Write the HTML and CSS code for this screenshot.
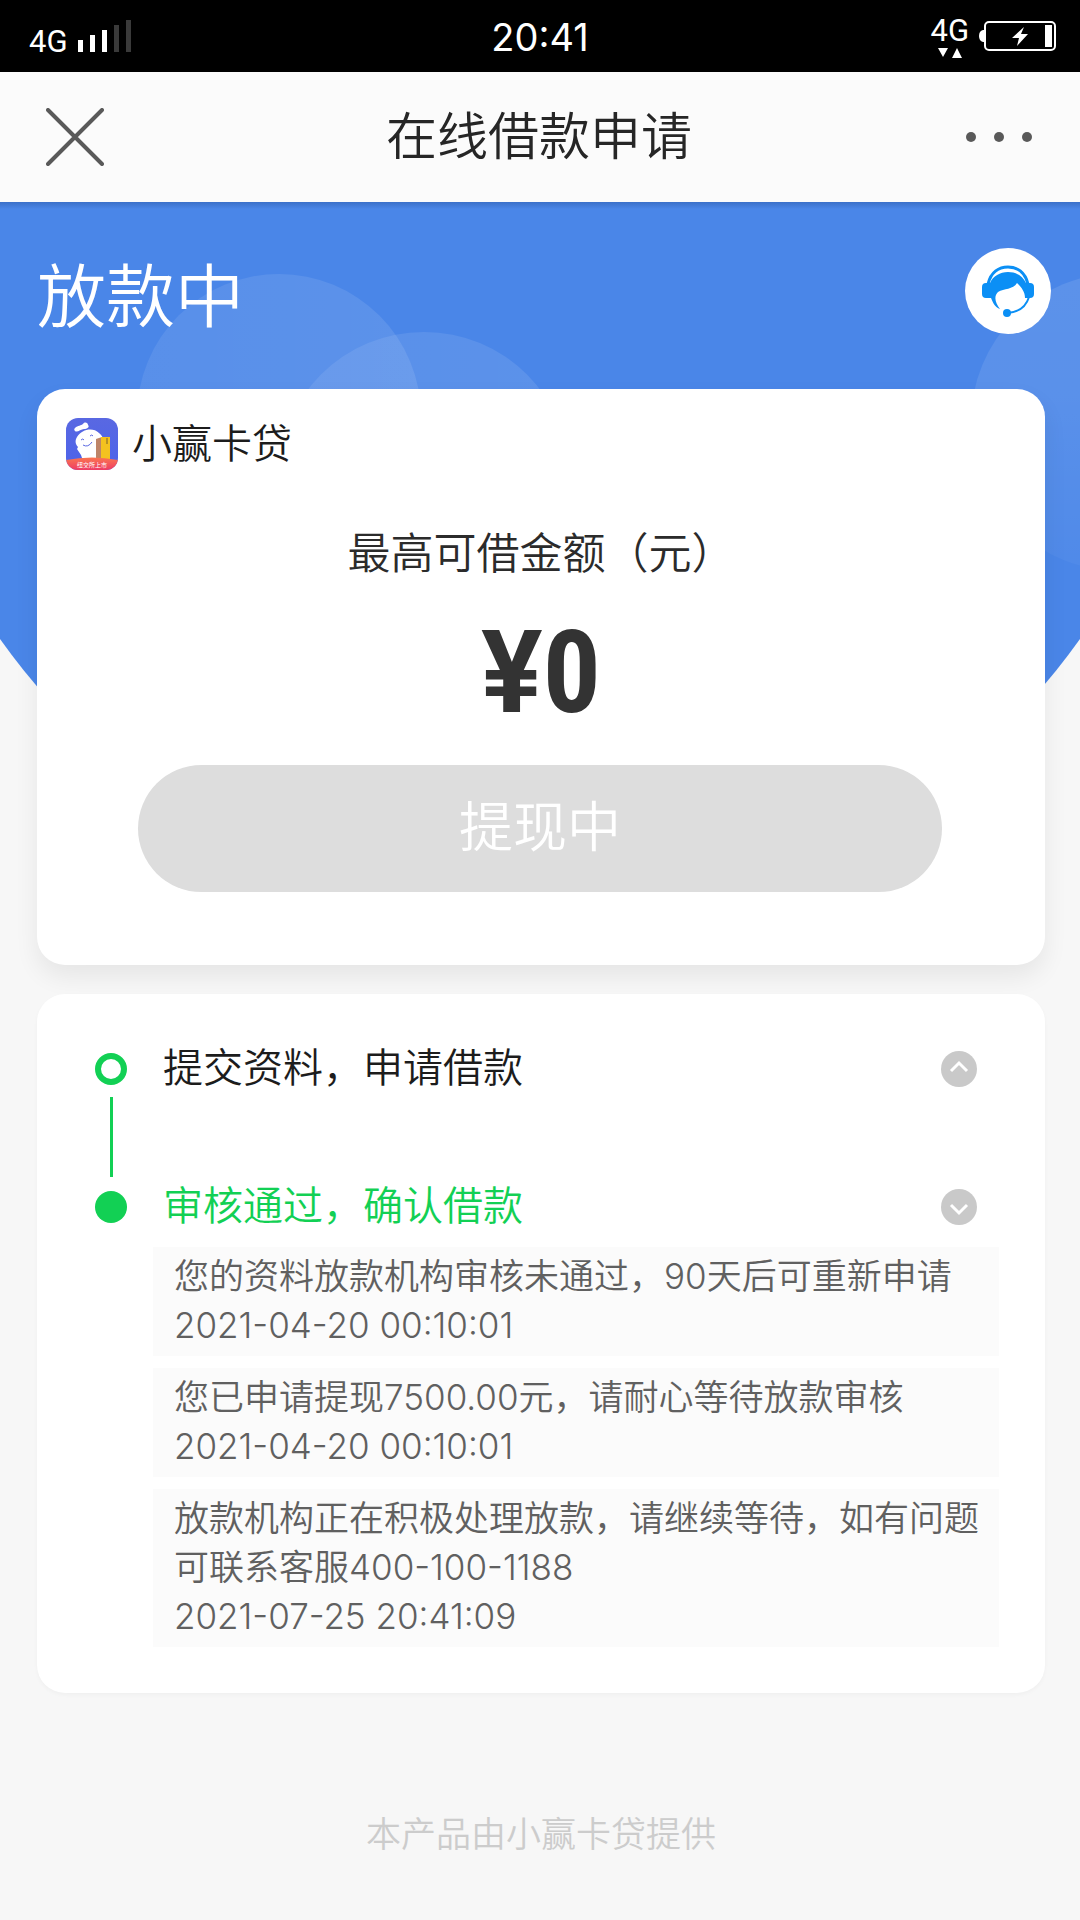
FILE: index.html
```html
<!DOCTYPE html>
<html lang="zh-CN">
<head>
<meta charset="utf-8">
<meta name="viewport" content="width=device-width, initial-scale=1">
<title>在线借款申请</title>
<link rel="stylesheet" href="styles.css">
</head>
<body>
<div class="status-bar">
  <div class="status-side status-left">
    <span class="network">4G</span>
    <svg class="signal" width="54" height="34" viewBox="0 0 54 34" aria-hidden="true">
      <path fill="#fff" d="M0 22h5v12H0zM12 17h5v17h-5zM24 12h5v22h-5z"/>
      <path fill="#3a3a3a" d="M36 7h5v27h-5zM48 2h5v32h-5z"/>
    </svg>
  </div>
  <time class="clock">20:41</time>
  <div class="status-side status-right">
    <div class="data">
      <span class="network">4G</span>
      <svg width="24" height="10" viewBox="0 0 24 10" aria-hidden="true"><path fill="#fff" d="M0 0h10L5 9zM14 10h10L19 0z"/></svg>
    </div>
    <svg width="78" height="30" viewBox="0 0 78 30" aria-hidden="true">
      <path fill="#fff" d="M5 9v12H4q-4-1-4-6t4-6z"/>
      <rect x="6" y="1" width="70" height="28" rx="4" fill="none" stroke="#fff" stroke-width="2"/>
      <path fill="#fff" d="M45 6 33 17h7l-2 8 11-12h-7zM66 4h7v22h-7z"/>
    </svg>
  </div>
</div>

<header class="nav">
  <button class="icon-button" aria-label="关闭">
    <svg width="58" height="58" viewBox="0 0 58 58"><path d="M2 2l54 54M56 2 2 56" fill="none" stroke="#595959" stroke-width="4" stroke-linecap="round"/></svg>
  </button>
  <h1 class="nav-title">在线借款申请</h1>
  <button class="icon-button" aria-label="更多">
    <svg width="66" height="10" viewBox="0 0 66 10" fill="#595959"><circle cx="5" cy="5" r="5"/><circle cx="33" cy="5" r="5"/><circle cx="61" cy="5" r="5"/></svg>
  </button>
</header>

<main class="page">
  <svg class="backdrop" viewBox="0 0 1080 713" aria-hidden="true">
    <defs>
      <clipPath id="dome"><path d="M0 0H1080V437A663 663 0 0 1 0 437Z"/></clipPath>
      <linearGradient id="sheen" x1="0" y1="0" x2="1" y2="0"><stop offset="0" stop-color="#fff" stop-opacity=".08"/><stop offset="1" stop-color="#fff" stop-opacity=".1"/></linearGradient>
      <linearGradient id="fade" x1="0" y1="0" x2="0" y2="1"><stop offset="0" stop-color="#fff" stop-opacity=".1"/><stop offset=".4" stop-color="#fff" stop-opacity=".09"/><stop offset="1" stop-color="#fff" stop-opacity=".03"/></linearGradient>
      <linearGradient id="edge" x1="0" y1="0" x2="0" y2="1"><stop offset="0" stop-color="#3b70c8"/><stop offset="1" stop-color="#4a86e8"/></linearGradient>
    </defs>
    <g clip-path="url(#dome)">
      <rect width="1080" height="713" fill="#4a86e8"/>
      <rect width="1080" height="7" fill="url(#edge)"/>
      <circle cx="279" cy="214" r="142" fill="url(#sheen)"/>
      <circle cx="424" cy="276" r="146" fill="url(#sheen)"/>
      <circle cx="1120" cy="220" r="149" fill="url(#fade)"/>
    </g>
  </svg>

  <div class="hero">
    <h2 class="hero-title">放款中</h2>
    <button class="support" aria-label="在线客服">
      <svg width="52" height="52" viewBox="0 0 52 52">
        <path d="M6 19C9 7 17 2 26 2s17 5 20 17" fill="none" stroke="#0b8ff5" stroke-width="3"/>
        <path fill="#0b8ff5" d="M0 22q0-4 4-4h4C11 11 18 7 26 7s15 4 18 11h4q4 0 4 4v7q0 4-4 4h-5c0-6-3-10-8-15-4 7-13 5-19 9-5 5-2 12 2 17-5-2-7-6-9-11H4q-4 0-4-4z"/>
        <path d="M47 32c-3 10-10 15-21 16" fill="none" stroke="#0b8ff5" stroke-width="2"/>
        <circle cx="25" cy="48" r="4" fill="#0b8ff5"/>
      </svg>
    </button>
  </div>

  <section class="card loan">
    <div class="brand">
      <svg width="52" height="52" viewBox="0 0 52 52" aria-hidden="true">
        <defs>
          <linearGradient id="tile" x1="0" y1="0" x2="0" y2="1"><stop offset="0" stop-color="#5968e2"/><stop offset="1" stop-color="#4c63ea"/></linearGradient>
          <linearGradient id="band" x1="0" y1="0" x2="0" y2="1"><stop offset="0" stop-color="#fa7550"/><stop offset="1" stop-color="#ee3c65"/></linearGradient>
          <clipPath id="tile-shape"><rect width="52" height="52" rx="12"/></clipPath>
        </defs>
        <g clip-path="url(#tile-shape)">
          <rect width="52" height="52" fill="url(#tile)"/>
          <path fill="#fff" d="M9 10c3-3 6-2 8-4 2-3 5-1 5 1 2 2-1 4-4 4-3 0-7 4-9 2-1-1-1-2 0-3zM11 19c5-8 16-10 22-4 3 2 4 5 4 7l-6 1v17H16l-1-3-4-6 1-2c-3-3-3-7-1-10z"/>
          <path d="M15 22q2-2 3 0M24 18q2-2 3 0M17 27q5 3 9-3" fill="none" stroke="#5968e2" stroke-width="1"/>
          <path fill="#bd8468" d="M30 21l6-2v22h-6z"/>
          <path fill="#f4c21f" d="M35 19h9v22h-9z"/>
          <path d="M41 20v6" stroke="#7b612b" stroke-width="1"/>
          <path fill="url(#band)" d="M0 42q26-5 52 0v10H0z"/>
          <text class="brand-band" x="26" y="49" text-anchor="middle">纽交所上市</text>
        </g>
      </svg>
      <span class="brand-name">小赢卡贷</span>
    </div>
    <p class="amount-label">最高可借金额（元）</p>
    <p class="amount"><span class="currency">¥</span>0</p>
    <button class="withdraw" disabled>提现中</button>
  </section>

  <section class="card progress">
    <ol class="steps">
      <li class="step">
        <span class="marker marker-open"></span>
        <h3 class="step-title">提交资料，申请借款</h3>
        <button class="toggle" aria-label="展开">
          <svg width="36" height="36" viewBox="0 0 36 36"><circle cx="18" cy="18" r="18" fill="#c9c9c9"/><path d="M10 20l8-8 8 8" fill="none" stroke="#fff" stroke-width="3"/></svg>
        </button>
        <span class="track"></span>
      </li>
      <li class="step step-current">
        <span class="marker"></span>
        <h3 class="step-title">审核通过，确认借款</h3>
        <button class="toggle" aria-label="收起">
          <svg width="36" height="36" viewBox="0 0 36 36"><circle cx="18" cy="18" r="18" fill="#c9c9c9"/><path d="M10 16l8 8 8-8" fill="none" stroke="#fff" stroke-width="3"/></svg>
        </button>
        <ul class="records">
          <li class="record">您的资料放款机构审核未通过，90天后可重新申请<time>2021-04-20 00:10:01</time></li>
          <li class="record">您已申请提现7500.00元，请耐心等待放款审核<time>2021-04-20 00:10:01</time></li>
          <li class="record">放款机构正在积极处理放款，请继续等待，如有问题可联系客服400-100-1188<time>2021-07-25 20:41:09</time></li>
        </ul>
      </li>
    </ol>
  </section>

  <footer class="footer">本产品由小赢卡贷提供</footer>
</main>
</body>
</html>
```
FILE: styles.css
```css
* {
  box-sizing: border-box;
}

body {
  margin: 0;
  min-height: 100vh;
  background: #f7f7f7;
  color: #1c1c1c;
  font-family: Inter, "Noto Sans CJK SC", sans-serif;
  font-weight: 350;
}

h1, h2, h3, p, ol, ul {
  margin: 0;
  padding: 0;
  font-weight: inherit;
}

ol, ul {
  list-style: none;
}

button {
  display: grid;
  place-items: center;
  padding: 0;
  border: 0;
  background: none;
  font: inherit;
}

svg {
  display: block;
}

.status-bar {
  display: grid;
  grid-template-columns: 1fr auto 1fr;
  align-items: center;
  height: 72px;
  padding: 0 23px;
  background: #000;
  color: #fff;
}

.status-side {
  display: flex;
  align-items: center;
  gap: 10px;
}

.status-left {
  padding-left: 6px;
}

.status-right {
  justify-content: flex-end;
}

.network {
  font-family: Roboto, sans-serif;
  font-size: 31px;
  font-weight: 400;
  line-height: 34px;
}

.signal {
  margin-bottom: 2px;
}

.status-side > .network {
  padding-top: 12px;
}

.data {
  display: grid;
  justify-items: center;
}

.clock {
  padding-top: 2px;
  font-size: 38px;
  font-weight: 400;
}

.nav {
  display: grid;
  grid-template-columns: 66px 1fr 66px;
  align-items: center;
  height: 130px;
  padding: 0 48px 0 46px;
  background: #fbfbfb;
}

.icon-button {
  justify-items: start;
}

.nav-title {
  color: #262626;
  font-size: 51px;
  line-height: 60px;
  text-align: center;
}

.page {
  position: relative;
  padding: 0 35px 0 37px;
}

.backdrop {
  position: absolute;
  top: 0;
  left: 0;
  z-index: -1;
  width: 100%;
}

.hero {
  display: flex;
  align-items: center;
  justify-content: space-between;
  height: 187px;
  margin-right: -6px;
}

.hero-title {
  padding-top: 2px;
  color: #fff;
  font-size: 69px;
  line-height: 80px;
}

.support {
  width: 86px;
  height: 86px;
  margin-bottom: 9px;
  border-radius: 50%;
  background: #fff;
}

.card {
  border-radius: 28px;
  background: #fff;
  box-shadow: 0 2px 4px rgba(0, 0, 0, 0.03);
}

.loan {
  display: flex;
  flex-direction: column;
  padding: 29px 29px 73px;
  box-shadow: 0 12px 24px rgba(0, 0, 0, 0.07);
}

.brand {
  display: flex;
  align-items: center;
  gap: 14px;
}

.brand-name {
  font-size: 40px;
  line-height: 52px;
}

.brand-band {
  fill: #fff;
  font-size: 6px;
  font-weight: 400;
}

.amount-label {
  padding-top: 55px;
  color: #2b2b2b;
  font-size: 43px;
  line-height: 56px;
  text-align: center;
}

.amount {
  padding: 26px 0;
  color: #333;
  font-family: "Roboto Condensed", Roboto, sans-serif;
  font-size: 115px;
  font-weight: 700;
  line-height: 132px;
  text-align: center;
}

.currency {
  font-family: Roboto, sans-serif;
}

.withdraw {
  height: 127px;
  margin: 0 74px 0 72px;
  padding-bottom: 11px;
  border-radius: 64px;
  background: #ddd;
  color: #fff;
  font-size: 54px;
}

.progress {
  margin-top: 29px;
  padding: 49px 46px 46px 58px;
}

.step {
  display: grid;
  grid-template-columns: 32px 1fr 36px;
  column-gap: 36px;
  align-items: center;
  padding-right: 22px;
}

.marker {
  width: 32px;
  height: 32px;
  border-radius: 50%;
  background: #12d054;
}

.marker-open {
  border: 6px solid #12d054;
  background: none;
}

.track {
  width: 3px;
  height: 80px;
  margin: 2px auto 4px;
  background: #12d054;
}

.step-title {
  padding-bottom: 2px;
  font-size: 40px;
  line-height: 50px;
}

.step-current {
  color: #12d054;
}

.toggle {
  width: 36px;
  height: 36px;
}

.records {
  display: grid;
  grid-column: 1 / -1;
  gap: 12px;
  margin: 14px -22px 0 58px;
  color: #606060;
}

.record {
  padding: 5px 16px 6px 21px;
  background: #fbfbfb;
  font-size: 35px;
  line-height: 49px;
}

.record time {
  display: block;
}

.footer {
  padding: 113px 0 54px;
  color: #ccc;
  font-size: 35px;
  line-height: 56px;
  text-align: center;
}
```
